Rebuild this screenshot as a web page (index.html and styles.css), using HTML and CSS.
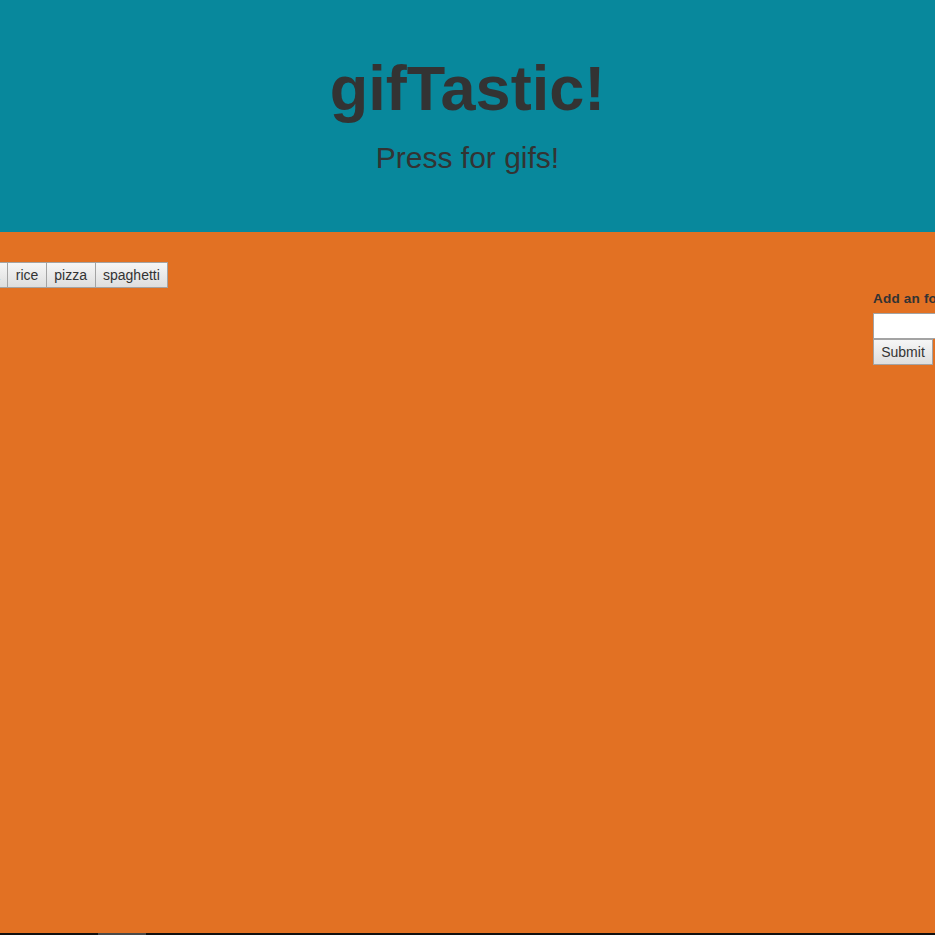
FILE: index.html
```html
<!DOCTYPE html>
<html>
<head>
<meta charset="utf-8">
<link rel="stylesheet" href="styles.css">
</head>
<body>
<header class="hero">
  <h1 class="title">gifTastic!</h1>
  <p class="subtitle">Press for gifs!</p>
</header>
<main class="content">
  <div class="left">
    <div class="btn-row">
      <button class="food">pasta</button><button class="food">rice</button><button class="food">pizza</button><button class="food">spaghetti</button>
    </div>
  </div>
  <form class="add-form">
    <label class="add-label">Add an food</label>
    <input class="add-input" type="text">
    <button class="submit" type="button">Submit</button>
  </form>
</main>
<div class="scrollbar"><div class="thumb"></div></div>
</body>
</html>
```
FILE: styles.css
```css
html, body {
  margin: 0;
  padding: 0;
  overflow: hidden;
  height: 935px;
}
body {
  font-family: "Liberation Sans", Arial, sans-serif;
  color: #333;
  background: #e27123;
  display: flex;
  flex-direction: column;
}
.hero {
  background: #08889c;
  height: 232px;
  text-align: center;
  box-sizing: border-box;
  padding-top: 48px;
}
.title {
  margin: 0;
  font-size: 63px;
  line-height: 80px;
  font-weight: bold;
  color: #333;
}
.subtitle {
  margin: 12px 0 0;
  font-size: 30px;
  line-height: 36px;
  color: #333;
}
.content {
  flex: 1;
  display: flex;
  justify-content: space-between;
  background: #e27123;
  overflow: hidden;
}
.left {
  padding-top: 30px;
}
.btn-row {
  display: flex;
  margin-left: -43px;
}
.food, .submit {
  font-family: "Liberation Sans", Arial, sans-serif;
  font-size: 14px;
  color: #333;
  height: 26px;
  padding: 0 7.5px;
  border: 1px solid #a3a3a3;
  border-radius: 0;
  background: linear-gradient(#f6f6f6, #dedede);
  margin: 0;
}
.food + .food {
  margin-left: -1px;
}
.add-form {
  width: 62px;
  padding-top: 58px;
  display: flex;
  flex-direction: column;
  align-items: flex-start;
  white-space: nowrap;
}
.add-label {
  font-size: 13.5px;
  font-weight: bold;
  line-height: 17px;
  letter-spacing: 0.2px;
  margin-bottom: 6px;
}
.add-input {
  width: 120px;
  height: 26px;
  box-sizing: border-box;
  border: 1px solid #a3a3a3;
  background: #fff;
  margin: 0;
}
.submit {
  width: 60px;
  padding: 0;
}
.scrollbar {
  height: 2px;
  background: #111;
  padding-left: 98px;
}
.thumb {
  width: 48px;
  height: 2px;
  background: #4a4a4a;
}
```
